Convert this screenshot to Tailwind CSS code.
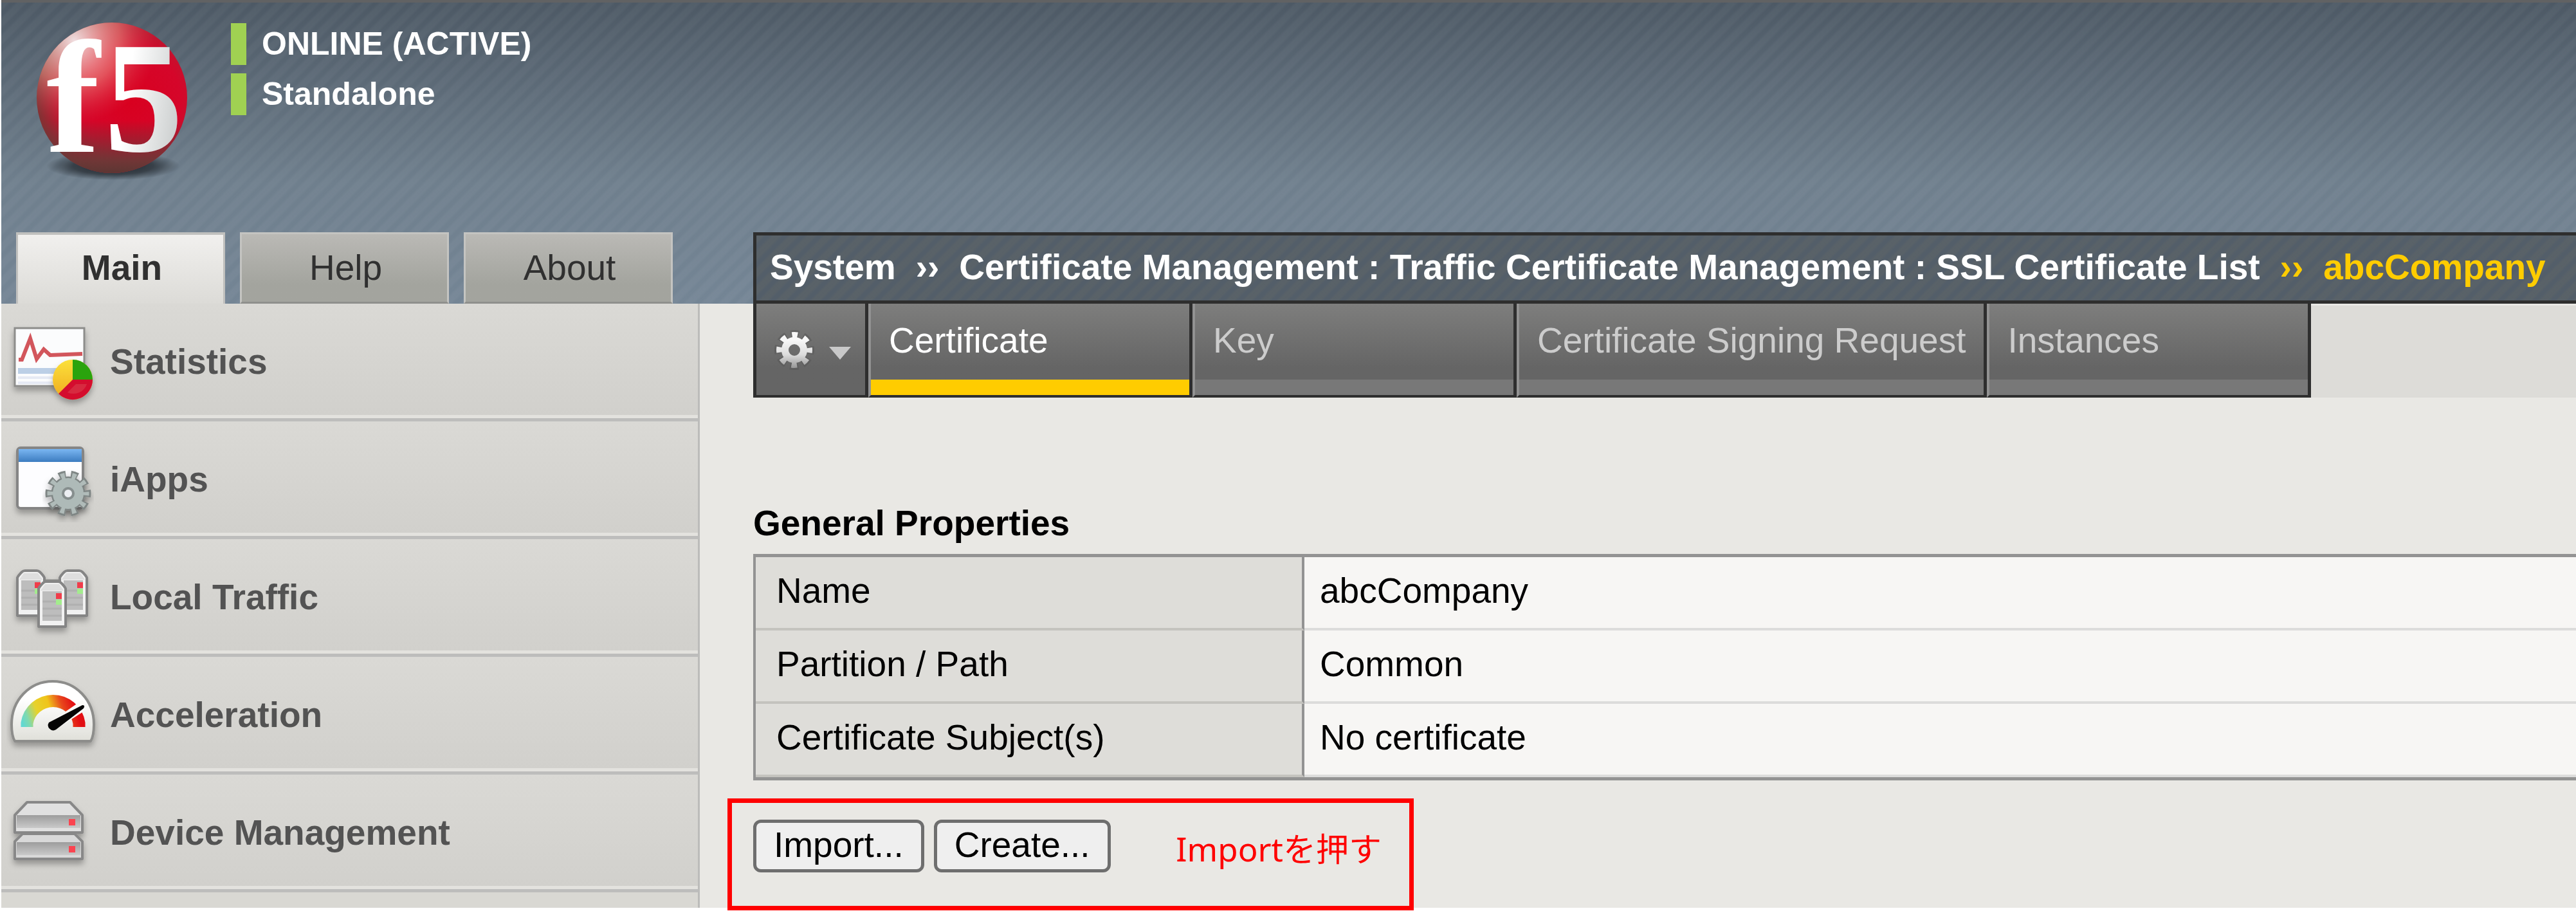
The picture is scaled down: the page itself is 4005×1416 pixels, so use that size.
<!DOCTYPE html>
<html lang="ja">
<head>
<meta charset="utf-8">
<meta name="viewport" content="width=device-width, initial-scale=1">
<title>abcCompany - SSL Certificate List</title>
<script src="https://cdn.jsdelivr.net/npm/@tailwindcss/browser@4"></script>
</head>
<body class="bg-white">
<div class="flex min-h-screen flex-col overflow-x-hidden pb-[5px] pl-[2px] font-['Liberation_Sans',Arial,sans-serif] text-[55px] leading-[64px] text-black">

  <!-- Banner: device status, navigation tabs, breadcrumb -->
  <header class="flex flex-col border-t-4 border-[#616263] bg-[repeating-linear-gradient(135deg,rgba(255,255,255,0.035)_0px,rgba(255,255,255,0.035)_7px,rgba(255,255,255,0)_11px,rgba(255,255,255,0)_15px,rgba(255,255,255,0.035)_19px),linear-gradient(to_bottom,#4d5965,#6f7f8d_60%,#748595)]">
    <div class="flex h-[357px] items-start">
      <svg class="ml-[48px] mt-[26px] h-[256px] w-[250px] shrink-0 overflow-visible" viewBox="0 0 250 256" role="img" aria-label="f5">
        <defs>
          <radialGradient id="ball" cx="0.62" cy="0.52" r="0.62">
            <stop offset="0" stop-color="#d9001f"/><stop offset="0.55" stop-color="#d5062a"/><stop offset="0.8" stop-color="#b81a30"/><stop offset="1" stop-color="#7d3434"/>
          </radialGradient>
          <radialGradient id="shine" cx="0.25" cy="0.12" r="0.55">
            <stop offset="0" stop-color="#fff" stop-opacity="0.85"/><stop offset="0.55" stop-color="#f0a090" stop-opacity="0.5"/><stop offset="1" stop-color="#e04050" stop-opacity="0"/>
          </radialGradient>
          <linearGradient id="shade" x1="0" y1="0" x2="0" y2="1">
            <stop offset="0.65" stop-color="#5d3b38" stop-opacity="0"/><stop offset="0.92" stop-color="#673a37" stop-opacity="0.9"/><stop offset="1" stop-color="#5c3633"/>
          </linearGradient>
          <linearGradient id="five" x1="0" y1="0" x2="1" y2="0.3">
            <stop offset="0.4" stop-color="#fff"/><stop offset="1" stop-color="#cfd2d2"/>
          </linearGradient>
          <radialGradient id="ground">
            <stop offset="0" stop-color="#1d2329"/><stop offset="0.6" stop-color="#2a3138" stop-opacity="0.8"/><stop offset="1" stop-color="#2a3138" stop-opacity="0"/>
          </radialGradient>
        </defs>
        <ellipse cx="126" cy="228" rx="104" ry="22" fill="url(#ground)"/>
        <circle cx="124" cy="122" r="117" fill="url(#ball)"/>
        <circle cx="124" cy="122" r="117" fill="url(#shade)"/>
        <circle cx="124" cy="122" r="117" fill="url(#shine)"/>
        <text x="22" y="206" font-family="Liberation Serif, serif" font-weight="700" font-size="250" fill="#fff">f</text>
        <text x="112" y="205" font-family="Liberation Serif, serif" font-weight="700" font-size="245" fill="url(#five)">5</text>
      </svg>
      <div class="ml-[59px] mt-[32px] flex flex-col gap-[13px] text-[50px] font-bold text-white">
        <p class="border-l-[24px] border-[#a0d152] pl-[24px] leading-[65px]">ONLINE (ACTIVE)</p>
        <p class="border-l-[24px] border-[#a0d152] pl-[24px] leading-[65px]">Standalone</p>
      </div>
    </div>
    <div class="flex h-[111px] items-stretch">
      <nav class="flex w-[1086px] shrink-0 gap-[23px] pl-[23px] text-[#303030]">
        <a href="#main" class="flex w-[325px] items-center justify-center border-x-3 border-t-4 border-[#c0c0be] bg-linear-to-b from-[#f1f0ee] to-[#dcdbd7] pb-[6px] pl-[4px] font-bold">Main</a>
        <a href="#help" class="flex w-[325px] items-center justify-center border-3 border-[#c4c4c1] border-b-[#8f908d] bg-linear-to-b from-[#bab9b5] to-[#a3a49e] to-75% pb-[2px] pl-[4px]">Help</a>
        <a href="#about" class="flex w-[325px] items-center justify-center border-3 border-[#c4c4c1] border-b-[#8f908d] bg-linear-to-b from-[#bab9b5] to-[#a3a49e] to-75% pb-[2px] pl-[4px]">About</a>
      </nav>
      <h1 class="ml-[83px] flex min-w-0 flex-1 items-center gap-[31px] overflow-hidden whitespace-nowrap border-y-5 border-l-5 border-[#2e2e2e] bg-[#535e69] bg-[repeating-linear-gradient(135deg,rgba(110,110,100,0.22)_0px,rgba(110,110,100,0.22)_7px,rgba(110,110,100,0)_11px,rgba(110,110,100,0)_15px,rgba(110,110,100,0.22)_19px)] pb-[3px] pl-[21px] font-bold text-white">
        <span>System</span><span>››</span><span>Certificate Management : Traffic Certificate Management : SSL Certificate List</span><span class="text-[#ffcc00]">››</span><span class="text-[#ffcc00]">abcCompany</span>
      </h1>
    </div>
  </header>

  <div class="flex flex-1">
    <!-- Sidebar -->
    <nav class="w-[1086px] shrink-0 border-r-3 border-[#bcbcba] bg-[#d9d8d3] font-bold text-[#535353]">
      <a href="#statistics" class="flex h-[183px] items-center gap-[11px] border-b-5 border-[#bdbdbc] bg-linear-to-b from-[#dad9d5] to-[#d1d0cc] pl-[8px] pt-[2px] shadow-[inset_0_-5px_0_#e3e2de]">
        <svg class="h-[150px] w-[150px] shrink-0" viewBox="0 0 150 150" aria-hidden="true">
          <defs><filter id="soft" x="-20%" y="-20%" width="140%" height="150%"><feDropShadow dx="0" dy="6" stdDeviation="5" flood-color="#000" flood-opacity="0.3"/></filter>
          <linearGradient id="yel" x1="0" y1="0" x2="0" y2="1"><stop offset="0" stop-color="#fbe13a"/><stop offset="1" stop-color="#f0a91f"/></linearGradient></defs>
          <rect x="13" y="23" width="108" height="90" fill="#fbfcfd" stroke="#8d8d8b" stroke-width="3" filter="url(#soft)"/>
          <path d="M18 100h60M18 108h60" stroke="#e6eaf4" stroke-width="4"/>
          <rect x="18" y="85" width="60" height="9" fill="#bccfe6"/>
          <path d="M19 72h5L37 39L47 71L58 56L68 65L118 63" fill="none" stroke="#d2565c" stroke-width="6"/>
          <g filter="url(#soft)"><circle cx="103" cy="103" r="31" fill="url(#yel)"/>
          <path d="M103 103V72A31 31 0 0 1 134 103Z" fill="#2ba311"/>
          <path d="M103 103H134A31 31 0 0 1 81 125Z" fill="#d4102f"/>
          <path d="M108 110h17a22 22 0 0 1-30 13Z" fill="#d93a4e" opacity="0.6"/></g>
        </svg>Statistics</a>
      <a href="#iapps" class="flex h-[183px] items-center gap-[11px] border-b-5 border-[#bdbdbc] bg-linear-to-b from-[#dad9d5] to-[#d1d0cc] pl-[8px] pt-[2px] shadow-[inset_0_-5px_0_#e3e2de]">
        <svg class="h-[150px] w-[150px] shrink-0" viewBox="0 0 150 150" aria-hidden="true">
          <defs><linearGradient id="bar" x1="0" y1="0" x2="0" y2="1"><stop offset="0" stop-color="#7ab6f2"/><stop offset="1" stop-color="#3c7cc0"/></linearGradient></defs>
          <rect x="17" y="26" width="102" height="94" rx="5" fill="#fdfdff" stroke="#858585" stroke-width="4" filter="url(#soft)"/>
          <rect x="19" y="28" width="98" height="20" fill="url(#bar)"/>
          <g filter="url(#soft)" fill="none">
            <circle cx="96" cy="97" r="28" stroke="#7f8685" stroke-width="15" stroke-dasharray="10 7.59" stroke-dashoffset="5"/>
            <circle cx="96" cy="97" r="16" stroke="#7f8685" stroke-width="21"/>
            <circle cx="96" cy="97" r="27" stroke="#b0bbb9" stroke-width="11" stroke-dasharray="6 10.96" stroke-dashoffset="3"/>
            <circle cx="96" cy="97" r="15.5" stroke="#aebab8" stroke-width="17"/>
            <circle cx="96" cy="97" r="8" fill="#eceef2" stroke="#868e8e" stroke-width="4"/>
          </g>
        </svg>iApps</a>
      <a href="#local-traffic" class="flex h-[183px] items-center gap-[11px] border-b-5 border-[#bdbdbc] bg-linear-to-b from-[#dad9d5] to-[#d1d0cc] pl-[8px] pt-[2px] shadow-[inset_0_-5px_0_#e3e2de]">
        <svg class="h-[150px] w-[150px] shrink-0" viewBox="0 0 150 150" aria-hidden="true">
          <defs><symbol id="tower" viewBox="0 0 46 74" width="46" height="74">
            <path d="M2 72V13Q3 10 9 4Q11 2 14 2H32Q35 2 37 4Q43 10 44 13V72Z" fill="#f1f1f1" stroke="#858585" stroke-width="4" stroke-linejoin="round"/>
            <path d="M5 16L12 6H34L41 16Z" fill="#dedede"/>
            <rect x="8" y="17" width="30" height="46" fill="#bdbdbd"/>
            <path d="M8 33h22M8 44h30M8 55h30" stroke="#b0b0b0" stroke-width="3"/>
            <rect x="29" y="20" width="9" height="9" fill="#f03c4b"/><rect x="29" y="30" width="9" height="8" fill="#a3ec8d"/>
          </symbol></defs>
          <g filter="url(#soft)"><path d="M56 50h28" stroke="#8b8b88" stroke-width="5"/>
          <use href="#tower" x="15" y="32"/><use href="#tower" x="81" y="32"/><use href="#tower" x="48" y="49"/></g>
        </svg>Local Traffic</a>
      <a href="#acceleration" class="flex h-[183px] items-center gap-[11px] border-b-5 border-[#bdbdbc] bg-linear-to-b from-[#dad9d5] to-[#d1d0cc] pl-[8px] pt-[2px] shadow-[inset_0_-5px_0_#e3e2de]">
        <svg class="h-[150px] w-[150px] shrink-0" viewBox="0 0 150 150" aria-hidden="true">
          <defs><linearGradient id="heat" gradientUnits="userSpaceOnUse" x1="22" y1="94" x2="122" y2="60"><stop offset="0.04" stop-color="#62d8d2"/><stop offset="0.14" stop-color="#7fd9b0"/><stop offset="0.3" stop-color="#e6d22c"/><stop offset="0.5" stop-color="#f0c41a"/><stop offset="0.68" stop-color="#e8481c"/><stop offset="0.85" stop-color="#e20f14"/></linearGradient>
          <linearGradient id="dome" x1="0" y1="0" x2="0" y2="1"><stop offset="0.3" stop-color="#fff"/><stop offset="1" stop-color="#dfdfd9"/></linearGradient></defs>
          <path d="M13 116Q8 108 8 90C8 52 36 23 72 23S136 52 136 90Q136 108 131 116Z" fill="url(#dome)" stroke="#8d8d8b" stroke-width="4" stroke-linejoin="round" filter="url(#soft)"/>
          <path d="M32 94V88A41 41 0 0 1 113 88V94" fill="none" stroke="url(#heat)" stroke-width="19"/>
          <path d="M66 88L118 52L126 66L76 98Z" fill="#fafaf8"/>
          <path d="M66 87L118 60Q123 60 120 65L77 98A8 8 0 0 1 66 87Z" fill="#050505"/>
        </svg>Acceleration</a>
      <a href="#device-management" class="flex h-[183px] items-center gap-[11px] border-b-5 border-[#bdbdbc] bg-linear-to-b from-[#dad9d5] to-[#d1d0cc] pl-[8px] pt-[2px] shadow-[inset_0_-5px_0_#e3e2de]">
        <svg class="h-[150px] w-[150px] shrink-0" viewBox="0 0 150 150" aria-hidden="true">
          <defs><linearGradient id="rack" x1="0" y1="0" x2="0" y2="1"><stop offset="0" stop-color="#9d9d9d"/><stop offset="1" stop-color="#c9c9c9"/></linearGradient></defs>
          <g filter="url(#soft)" stroke-linejoin="round">
            <path d="M13 116V89L25 77H106L118 89V116Z" fill="#d9d9d9" stroke="#888" stroke-width="4"/>
            <rect x="16" y="90" width="99" height="20" fill="url(#rack)"/>
            <path d="M13 75V48L32 28H99L118 48V75Z" fill="#e0e0e0" stroke="#888" stroke-width="4"/>
            <rect x="16" y="48" width="99" height="20" fill="url(#rack)"/>
          </g>
          <rect x="97" y="54" width="10" height="10" fill="#fb4450"/><rect x="97" y="96" width="10" height="10" fill="#fb4450"/>
        </svg>Device Management</a>
    </nav>

    <main class="min-w-0 flex-1 bg-[#e9e8e4] pl-[83px]">
      <!-- Page tabs -->
      <div class="flex h-[146px] bg-[#dddcd8] shadow-[inset_0_3px_0_#e9e8e4]">
        <button type="button" aria-label="Options" class="flex w-[179px] shrink-0 items-center border-x-5 border-b-4 border-[#2e2e2e] bg-linear-to-b from-[#7e7e7d] to-[#656565] to-70%">
          <svg class="h-[142px] w-[169px]" viewBox="0 0 169 142" aria-hidden="true">
            <defs><linearGradient id="cog" gradientUnits="userSpaceOnUse" x1="0" y1="45" x2="0" y2="102"><stop offset="0.2" stop-color="#f8f8f8"/><stop offset="0.6" stop-color="#dcdcdc"/><stop offset="1" stop-color="#909090"/></linearGradient></defs>
            <circle cx="59" cy="72" r="24" fill="none" stroke="#555" stroke-opacity="0.5" stroke-width="14" stroke-dasharray="12 6.85" stroke-dashoffset="6"/>
            <circle cx="59" cy="72" r="23" fill="none" stroke="url(#cog)" stroke-width="10" stroke-dasharray="8.5 9.56" stroke-dashoffset="4.25"/>
            <circle cx="59" cy="72" r="14.5" fill="none" stroke="url(#cog)" stroke-width="11"/>
            <path d="M113 67H147L130 87Z" fill="#c9c9c9"/>
          </svg>
        </button>
        <a href="#certificate" class="flex min-w-[504px] flex-col justify-between border-b-4 border-l-4 border-r-5 border-[#2e2e2e] border-l-[#929292] bg-linear-to-b from-[#7e7e7d] to-[#656565] to-70% text-white"><span class="px-[28px] pt-[25px]">Certificate</span><span class="h-[24px] bg-[#ffcc00]"></span></a>
        <a href="#key" class="flex min-w-[504px] flex-col justify-between border-b-4 border-l-4 border-r-5 border-[#2e2e2e] border-l-[#929292] bg-linear-to-b from-[#7e7e7d] to-[#656565] to-70% text-[#cccccc]"><span class="px-[28px] pt-[25px]">Key</span><span class="h-[24px] bg-[#787878]"></span></a>
        <a href="#csr" class="flex min-w-[504px] flex-col justify-between whitespace-nowrap border-b-4 border-l-4 border-r-5 border-[#2e2e2e] border-l-[#929292] bg-linear-to-b from-[#7e7e7d] to-[#656565] to-70% text-[#cccccc]"><span class="px-[28px] pt-[25px]">Certificate Signing Request</span><span class="h-[24px] bg-[#787878]"></span></a>
        <a href="#instances" class="flex min-w-[504px] flex-col justify-between border-b-4 border-l-4 border-r-5 border-[#2e2e2e] border-l-[#929292] bg-linear-to-b from-[#7e7e7d] to-[#656565] to-70% text-[#cccccc]"><span class="px-[28px] pt-[25px]">Instances</span><span class="h-[24px] bg-[#787878]"></span></a>
      </div>

      <h2 class="mt-[163px] font-bold">General Properties</h2>
      <table class="mt-[16px] w-full border-separate border-spacing-0 border-y-5 border-l-4 border-[#939393] text-left">
        <tbody>
          <tr><th scope="row" class="w-[853px] border-b-4 border-r-4 border-[#c4c3be] border-r-[#939393] bg-[#deddd9] pb-[26px] pl-[32px] pt-[20px] font-normal">Name</th><td class="border-b-4 border-[#dcdcdb] bg-[#f7f6f4] pb-[26px] pl-[24px] pt-[20px]">abcCompany</td></tr>
          <tr><th scope="row" class="border-b-4 border-r-4 border-[#c4c3be] border-r-[#939393] bg-[#deddd9] pb-[26px] pl-[32px] pt-[20px] font-normal">Partition / Path</th><td class="border-b-4 border-[#dcdcdb] bg-[#f7f6f4] pb-[26px] pl-[24px] pt-[20px]">Common</td></tr>
          <tr><th scope="row" class="border-b-4 border-r-4 border-[#c4c3be] border-r-[#939393] bg-[#deddd9] pb-[26px] pl-[32px] pt-[20px] font-normal">Certificate Subject(s)</th><td class="border-b-4 border-[#dcdcdb] bg-[#f7f6f4] pb-[26px] pl-[24px] pt-[20px]">No certificate</td></tr>
        </tbody>
      </table>

      <div class="relative mt-[61px] flex gap-[15px]">
        <button type="button" class="h-[82px] rounded-[12px] border-5 border-[#6e6e6e] bg-[#efefef] px-[27px] pb-[4px]">Import...</button>
        <button type="button" class="h-[82px] rounded-[12px] border-5 border-[#6e6e6e] bg-[#efefef] px-[27px] pb-[4px]">Create...</button>
        <!-- Callout around the two buttons -->
        <div class="pointer-events-none absolute -left-[40px] -top-[33px] flex h-[174px] w-[1067px] items-center justify-end border-7 border-[#ff0000] pb-[18px] pr-[43px] font-['Noto_Sans','Noto_Sans_CJK_JP',sans-serif] text-[51px] text-[#ff0000]">Importを押す</div>
      </div>
    </main>
  </div>
</div>
</body>
</html>
